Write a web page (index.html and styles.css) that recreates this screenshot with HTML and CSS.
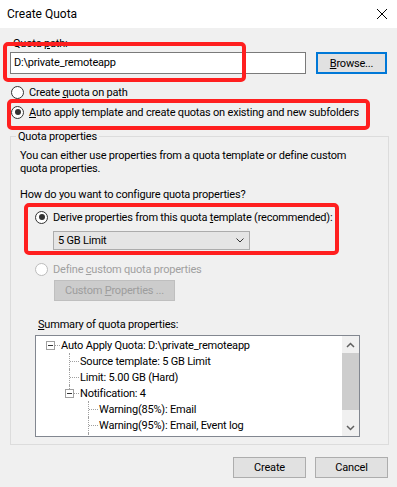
FILE: index.html
```html
<!DOCTYPE html>
<html lang="en">
<head>
    <meta charset="UTF-8">
    <title>Create Quota</title>
    <link rel="stylesheet" href="styles.css">
</head>
<body>
    <div class="window">
        <div class="titlebar">
            <span class="title">Create Quota</span>
            <svg class="close" width="12" height="12" viewBox="0 0 12 12">
                <path d="M1 1 L11 11 M11 1 L1 11" stroke="#000" stroke-width="1" fill="none"/>
            </svg>
        </div>

        <div class="dialog">
            <div class="field-label">Quota <u>p</u>ath:</div>
            <div class="path-row">
                <div class="textbox">D:\private_remoteapp</div>
                <div class="btn btn-default"><span><u>B</u>rowse...</span></div>
            </div>

            <div class="radio first"><span class="dot"></span><span>Create <u>q</u>uota on path</span></div>
            <div class="radio second"><span class="dot on"></span><span><u>A</u>uto apply template and create quotas on existing and new subfolders</span></div>

            <fieldset class="group">
                <legend>Quota properties</legend>
                <p class="intro">You can either use properties from a quota template or define custom<br>quota properties.</p>
                <p class="question">How do you want to configure quota properties?</p>

                <div class="radio option"><span class="dot on"></span><span>Derive properties from this quota <u>t</u>emplate (recommended):</span></div>
                <div class="combo">
                    <span>5 GB Limit</span>
                    <svg width="8" height="5" viewBox="0 0 8 5">
                        <path d="M0.5 0.5 L4 4 L7.5 0.5" stroke="#333" fill="none"/>
                    </svg>
                </div>

                <div class="radio option disabled"><span class="dot"></span><span>Define <u>c</u>ustom quota properties</span></div>
                <div class="btn btn-disabled"><span>Custom <u>P</u>roperties ...</span></div>

                <div class="summary-label"><u>S</u>ummary of quota properties:</div>
                <div class="tree">
                    <div class="tree-items">
                        <div class="node"><span class="guide exp root"><i></i></span><span class="text">Auto Apply Quota: D:\private_remoteapp</span></div>
                        <div class="node"><span class="guide"></span><span class="guide tee"></span><span class="text">Source template: 5 GB Limit</span></div>
                        <div class="node"><span class="guide"></span><span class="guide tee"></span><span class="text">Limit: 5.00 GB (Hard)</span></div>
                        <div class="node"><span class="guide"></span><span class="guide exp last"><i></i></span><span class="text">Notification: 4</span></div>
                        <div class="node"><span class="guide"></span><span class="guide"></span><span class="guide tee"></span><span class="text">Warning(85%): Email</span></div>
                        <div class="node"><span class="guide"></span><span class="guide"></span><span class="guide tee"></span><span class="text">Warning(95%): Email, Event log</span></div>
                        <div class="node"><span class="guide"></span><span class="guide"></span><span class="guide tee"></span></div>
                    </div>
                    <div class="scrollbar">
                        <div class="arrow">
                            <svg width="9" height="6" viewBox="0 0 9 6"><path d="M1 5 L4.5 1.5 L8 5" stroke="#606060" stroke-width="1.5" fill="none"/></svg>
                        </div>
                        <div class="thumb"></div>
                        <div class="track"></div>
                        <div class="arrow">
                            <svg width="9" height="6" viewBox="0 0 9 6"><path d="M1 1 L4.5 4.5 L8 1" stroke="#606060" stroke-width="1.5" fill="none"/></svg>
                        </div>
                    </div>
                </div>
            </fieldset>

            <div class="actions">
                <div class="btn"><span>Create</span></div>
                <div class="btn"><span>Cancel</span></div>
            </div>
        </div>

        <!-- red highlight marks drawn over the dialog -->
        <div class="mark mark-path"></div>
        <div class="mark mark-auto"></div>
        <div class="mark mark-template"></div>
    </div>
</body>
</html>
```

FILE: styles.css
```css
body {
    margin: 0;
    font-family: Roboto, 'Liberation Sans', sans-serif;
    font-size: 11px;
    letter-spacing: -0.2px;
    color: #000;
    background: #f0f0f0;
}

.window {
    position: relative;
    width: 397px;
    height: 487px;
    overflow: hidden;
    background: #f0f0f0;
}

.titlebar {
    height: 28px;
    background: #ffffff;
    display: flex;
    align-items: center;
    justify-content: space-between;
    padding: 0 9px 0 7px;
}

.title {
    font-size: 12px;
    letter-spacing: 0;
}

.close {
    display: block;
}

.dialog {
    padding: 0 8px 0 10px;
}

.field-label {
    margin-top: 8px;
    padding-left: 3px;
    line-height: 15px;
}

.path-row {
    display: flex;
    margin-top: 1px;
    gap: 10px;
}

.textbox {
    width: 296px;
    height: 22px;
    box-sizing: border-box;
    border: 1px solid #7a7a7a;
    background: #ffffff;
    padding-left: 3px;
    line-height: 20px;
}

.btn {
    display: flex;
    align-items: center;
    justify-content: center;
    box-sizing: border-box;
    width: 73px;
    height: 21px;
    border: 1px solid #adadad;
    background: #e1e1e1;
    white-space: nowrap;
}

.btn-default {
    width: 71px;
    height: 22px;
    border: 2px solid #0078d7;
}

.radio {
    display: flex;
    align-items: center;
    height: 16px;
    padding-left: 1px;
    white-space: nowrap;
}

.radio.first {
    margin-top: 10px;
}

.radio.second {
    margin-top: 4px;
}

.dot {
    position: relative;
    width: 13px;
    height: 13px;
    box-sizing: border-box;
    border: 1px solid #333333;
    border-radius: 50%;
    background: #ffffff;
    margin-right: 5px;
    flex-shrink: 0;
}

.dot.on::after {
    content: "";
    position: absolute;
    left: 2.5px;
    top: 2.5px;
    width: 6px;
    height: 6px;
    border-radius: 50%;
    background: #333333;
}

.group {
    margin: 9px 0 0 0;
    padding: 0 0 7px 9px;
    border: 1px solid #dcdcdc;
    min-width: 0;
}

.group legend {
    padding: 0 2px;
    margin-left: -4px;
    line-height: 15px;
}

.intro {
    margin: 5px 0 0 0;
    line-height: 13px;
}

.question {
    margin: 13px 0 0 0;
    line-height: 13px;
}

.radio.option {
    margin-top: 8px;
    padding-left: 15px;
}

.combo {
    display: flex;
    align-items: center;
    justify-content: space-between;
    box-sizing: border-box;
    width: 197px;
    height: 19px;
    margin: 6px 0 0 33px;
    padding: 0 5px 0 4px;
    border: 1px solid #acacac;
    background: #e5e5e5;
}

.radio.disabled {
    margin-top: 11px;
    color: #a0a0a0;
}

.radio.disabled .dot {
    border-color: #bcbcbc;
}

.btn-disabled {
    width: 121px;
    margin: 3px 0 0 34px;
    border-color: #bfbfbf;
    background: #cccccc;
    color: #9d9d9d;
}

.summary-label {
    margin: 17px 0 0 18px;
    line-height: 13px;
}

.tree {
    display: flex;
    width: 325px;
    height: 102px;
    box-sizing: border-box;
    margin: 4px 0 0 15px;
    border: 1px solid #828790;
    background: #ffffff;
    overflow: hidden;
}

.tree-items {
    flex: 1;
    padding: 1px 0 0 5px;
    overflow: hidden;
}

.node {
    display: flex;
    height: 16px;
    align-items: center;
    white-space: nowrap;
}

.node .text {
    margin-left: 1px;
}

.guide {
    position: relative;
    width: 19px;
    height: 16px;
    flex-shrink: 0;
}

/* dotted connector lines */
.guide.tee::before {
    content: "";
    position: absolute;
    left: 9px;
    top: 0;
    height: 16px;
    border-left: 1px dotted #a0a0a0;
}

.guide.tee::after,
.guide.exp::after {
    content: "";
    position: absolute;
    left: 10px;
    top: 8px;
    width: 9px;
    border-top: 1px dotted #a0a0a0;
}

.guide.exp.last::before {
    content: "";
    position: absolute;
    left: 9px;
    top: 0;
    height: 4px;
    border-left: 1px dotted #a0a0a0;
}

.guide.exp i {
    position: absolute;
    left: 5px;
    top: 4px;
    width: 9px;
    height: 9px;
    box-sizing: border-box;
    border: 1px solid #a0a0a0;
    background: #ffffff;
    z-index: 1;
}

.guide.exp i::after {
    content: "";
    position: absolute;
    left: 1px;
    top: 3px;
    width: 5px;
    border-top: 1px solid #333333;
}

.scrollbar {
    width: 17px;
    display: flex;
    flex-direction: column;
    background: #f0f0f0;
}

.arrow {
    height: 17px;
    display: flex;
    align-items: center;
    justify-content: center;
}

.thumb {
    height: 57px;
    background: #cdcdcd;
}

.track {
    flex: 1;
}

.actions {
    display: flex;
    justify-content: flex-end;
    gap: 9px;
    margin-top: 12px;
    padding-right: 1px;
}

.actions .btn {
    height: 21px;
}

.mark {
    position: absolute;
    box-sizing: border-box;
    border: 4px solid #ff1f1f;
    border-radius: 5px;
}

.mark-path {
    left: 3px;
    top: 42px;
    width: 243px;
    height: 40px;
}

.mark-auto {
    left: 7px;
    top: 99px;
    width: 363px;
    height: 31px;
}

.mark-template {
    left: 24px;
    top: 203px;
    width: 315px;
    height: 52px;
}
```
